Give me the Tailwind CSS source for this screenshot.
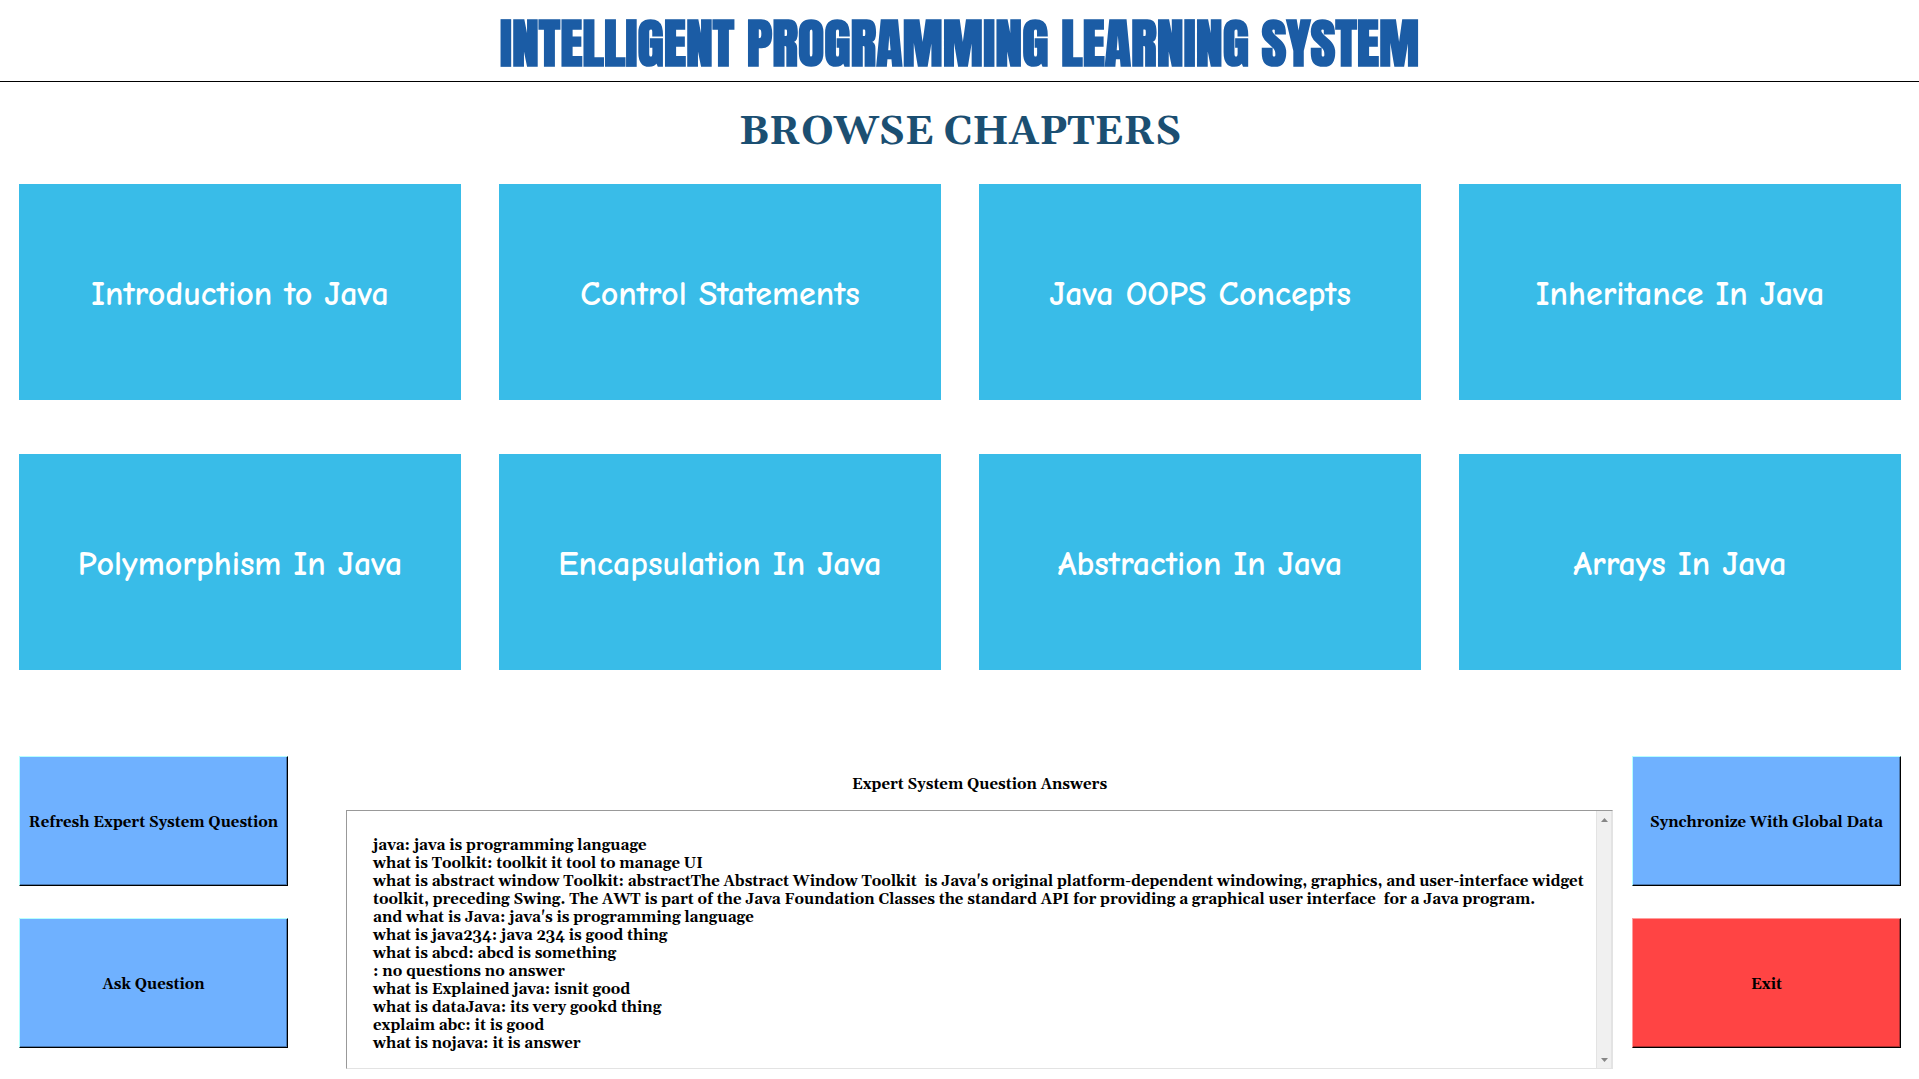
<!DOCTYPE html>
<html lang="en">
<head>
<meta charset="utf-8">
<title>Intelligent Programming Learning System</title>
<script src="https://cdn.jsdelivr.net/npm/@tailwindcss/browser@4"></script>
</head>
<body class="min-h-screen bg-white font-['Georgia','Gelasio','Liberation_Serif',serif] text-black">
  <header class="flex h-[82px] items-center justify-center border-b border-black pt-1">
    <h1 class="font-['Impact','Anton','Roboto_Condensed',sans-serif] text-[54px] leading-none font-bold whitespace-nowrap text-[#1b5ca5]">INTELLIGENT PROGRAMMING LEARNING SYSTEM</h1>
  </header>

  <main class="pr-[18px] pl-[19px]">
    <h2 class="pt-[25px] text-center text-[40px] leading-[52px] font-bold text-[#1b4f72]">BROWSE CHAPTERS</h2>

    <nav class="mt-[25px] grid grid-cols-4 gap-x-[38px] gap-y-[54px] font-['Comic_Sans_MS','Comic_Neue',cursive] text-[34px] font-bold text-white">
      <button class="h-[216px] bg-[#39bce8] pt-1">Introduction to Java</button>
      <button class="h-[216px] bg-[#39bce8] pt-1">Control Statements</button>
      <button class="h-[216px] bg-[#39bce8] pt-1">Java OOPS Concepts</button>
      <button class="h-[216px] bg-[#39bce8] pt-1">Inheritance In Java</button>
      <button class="h-[216px] bg-[#39bce8] pt-1">Polymorphism In Java</button>
      <button class="h-[216px] bg-[#39bce8] pt-1">Encapsulation In Java</button>
      <button class="h-[216px] bg-[#39bce8] pt-1">Abstraction In Java</button>
      <button class="h-[216px] bg-[#39bce8] pt-1">Arrays In Java</button>
    </nav>

    <section class="mt-[86px] flex text-[15px] leading-[18px] font-bold">
      <div class="flex w-[269px] shrink-0 flex-col gap-8">
        <button class="h-[130px] border border-t-[#b4ffff] border-r-black border-b-black border-l-[#b4ffff] bg-[#6fb1ff] pt-1 shadow-[inset_-1px_-1px_#4b78ae]">Refresh Expert System Question</button>
        <button class="h-[130px] border border-t-[#b4ffff] border-r-black border-b-black border-l-[#b4ffff] bg-[#6fb1ff] pt-1 shadow-[inset_-1px_-1px_#4b78ae]">Ask Question</button>
      </div>

      <div class="mr-[19px] ml-[58px] flex min-w-0 flex-1 flex-col pt-5">
        <label for="answers" class="mb-4 text-center">Expert System Question Answers</label>
        <div class="flex h-[259px] border border-t-[#999] border-r-[#e3e3e3] border-b-[#e3e3e3] border-l-[#999]">
          <textarea id="answers" readonly class="block min-w-0 flex-1 resize-none overflow-hidden py-[26px] pr-2 pl-[26px] outline-none">java: java is programming language
what is Toolkit: toolkit it tool to manage UI
what is abstract window Toolkit: abstractThe Abstract Window Toolkit  is Java's original platform-dependent windowing, graphics, and user-interface widget toolkit, preceding Swing. The AWT is part of the Java Foundation Classes the standard API for providing a graphical user interface  for a Java program.
and what is Java: java's is programming language
what is java234: java 234 is good thing
what is abcd: abcd is something
: no questions no answer
what is Explained java: isnit good
what is dataJava: its very gookd thing
explaim abc: it is good
what is nojava: it is answer</textarea>
          <div class="flex w-4 flex-col items-center justify-between border-x border-[#e3e3e3] bg-[#f0f0f0] pt-[7px] pb-[6px]" aria-hidden="true">
            <svg class="h-1 w-[7px]" viewBox="0 0 7 4"><path d="M3.5 0 7 4H0z" fill="#868686"/></svg>
            <svg class="h-1 w-[7px]" viewBox="0 0 7 4"><path d="M0 0h7L3.5 4z" fill="#868686"/></svg>
          </div>
        </div>
      </div>

      <div class="flex w-[269px] shrink-0 flex-col gap-8">
        <button class="h-[130px] border border-t-[#b4ffff] border-r-black border-b-black border-l-[#b4ffff] bg-[#6fb1ff] pt-1 shadow-[inset_-1px_-1px_#4b78ae]">Synchronize With Global Data</button>
        <button class="h-[130px] border border-t-[#ff9c9c] border-r-black border-b-black border-l-[#ff9c9c] bg-[#ff4444] pt-1 shadow-[inset_-1px_-1px_#a83030]">Exit</button>
      </div>
    </section>
  </main>
</body>
</html>
